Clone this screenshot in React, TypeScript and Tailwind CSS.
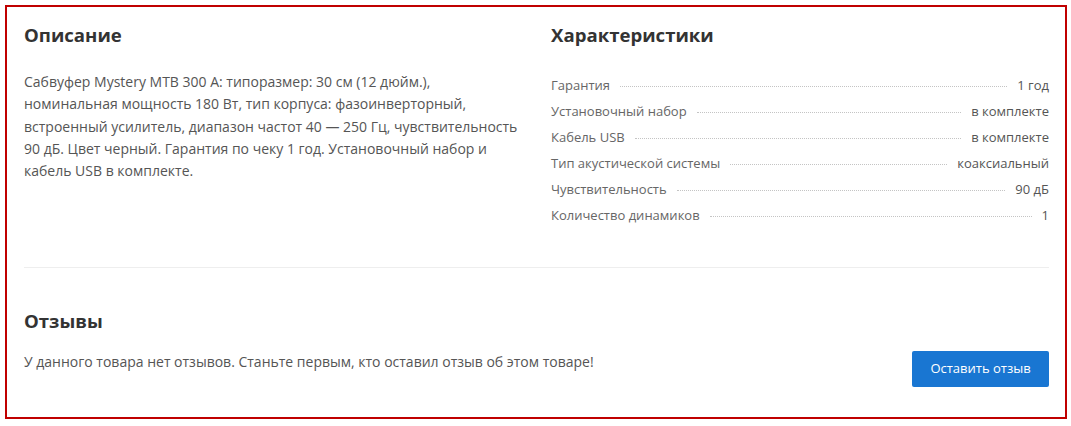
import React from "react";

const specs: [string, string][] = [
  ["Гарантия", "1 год"],
  ["Установочный набор", "в комплекте"],
  ["Кабель USB", "в комплекте"],
  ["Тип акустической системы", "коаксиальный"],
  ["Чувствительность", "90 дБ"],
  ["Количество динамиков", "1"],
];

export default function App() {
  return (
    <div className="bg-white w-[1071px] h-[426px] pt-[5px] pl-[5px]" style={{ fontFamily: '"Open Sans", "DejaVu Sans", sans-serif' }}>
      <div className="w-[1062px] h-[414px] border-2 border-[#c00000] pt-[16px] pl-[17px] pr-[16px]">
        <div className="flex gap-[30px]">
          <div className="w-[497px]">
            <h2 className="text-[18.6px] leading-[24px] font-bold text-[#333]">Описание</h2>
            <p className="mt-[24px] text-[14px] leading-[22.3px] text-[#555]">
              Сабвуфер Mystery МТВ 300 А: типоразмер: 30 см (12 дюйм.), номинальная мощность 180 Вт, тип корпуса: фазоинверторный, встроенный усилитель, диапазон частот 40 — 250 Гц, чувствительность 90 дБ. Цвет черный. Гарантия по чеку 1 год. Установочный набор и кабель USB в комплекте.
            </p>
          </div>
          <div className="w-[498px]">
            <h2 className="text-[18.6px] leading-[24px] font-bold text-[#333]">Характеристики</h2>
            <div className="mt-[25px] flex flex-col">
              {specs.map(([k, v]) => (
                <div key={k} className="flex items-center h-[26px] text-[13px] leading-[20px] text-[#666]">
                  <span>{k}</span>
                  <span className="flex-1 mx-[10px] mt-[3px] border-b border-dotted border-[#c4c4c4]"></span>
                  <span className="text-[#555]">{v}</span>
                </div>
              ))}
            </div>
          </div>
        </div>
        <div className="mt-[39px] border-t border-[#eee]"></div>
        <h2 className="mt-[41px] text-[18.6px] leading-[24px] font-bold text-[#333]">Отзывы</h2>
        <div className="mt-[18px] flex items-start justify-between">
          <p className="text-[14px] leading-[22.3px] text-[#555]">
            У данного товара нет отзывов. Станьте первым, кто оставил отзыв об этом товаре!
          </p>
          <button className="w-[137px] h-[36px] rounded-[2px] bg-[#1976d2] text-white text-[13px]">Оставить отзыв</button>
        </div>
      </div>
    </div>
  );
}
